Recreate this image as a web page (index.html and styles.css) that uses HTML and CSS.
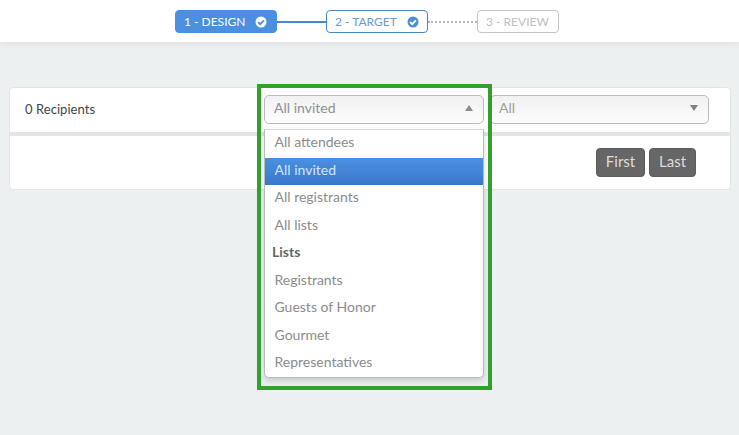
FILE: index.html
```html
<!DOCTYPE html>
<html lang="en">
<head>
<meta charset="utf-8">
<title>Recipients</title>
<link rel="stylesheet" href="styles.css">
</head>
<body>
<header class="topbar">
  <div class="step step-done">1 - DESIGN
    <svg class="check" viewBox="0 0 12 12"><circle cx="6" cy="6" r="5.5" fill="#fff"/><path d="M3.2 6.2 5.2 8.2 8.9 4.3" fill="none" stroke="#4a8fe0" stroke-width="1.8"/></svg>
  </div>
  <span class="link link-solid"></span>
  <div class="step step-active">2 - TARGET
    <svg class="check" viewBox="0 0 12 12"><circle cx="6" cy="6" r="5.5" fill="#4d8fd6"/><path d="M3.2 6.2 5.2 8.2 8.9 4.3" fill="none" stroke="#fff" stroke-width="1.8"/></svg>
  </div>
  <span class="link link-dotted"></span>
  <div class="step step-todo">3 - REVIEW</div>
</header>
<main class="content">
  <section class="card">
    <div class="row row-filters">
      <div class="count">0 Recipients</div>
      <div class="select select-open">
        <span>All invited</span><i class="caret caret-up"></i>
        <ul class="menu">
          <li>All attendees</li>
          <li class="selected">All invited</li>
          <li>All registrants</li>
          <li>All lists</li>
          <li class="group">Lists</li>
          <li>Registrants</li>
          <li>Guests of Honor</li>
          <li>Gourmet</li>
          <li>Representatives</li>
        </ul>
      </div>
      <div class="select select-second">
        <span>All</span><i class="caret caret-down"></i>
      </div>
    </div>
    <div class="row row-pager">
      <button class="btn btn-first">First</button>
      <button class="btn btn-last">Last</button>
    </div>
  </section>
</main>
<div class="focus-box"></div>
</body>
</html>
```
FILE: styles.css
```css
* { box-sizing: border-box; }
html, body { margin: 0; padding: 0; }
body {
  width: 739px;
  height: 435px;
  overflow: hidden;
  background: #ecf0f1;
  font-family: Lato, "Open Sans", sans-serif;
  position: relative;
}
.topbar {
  height: 42px;
  background: #fff;
  box-shadow: 0 1px 8px rgba(0,0,0,.08);
  display: flex;
  align-items: flex-start;
  padding: 10px 0 0 175px;
}
.step {
  height: 23px;
  border-radius: 4px;
  border: 1px solid;
  display: flex;
  align-items: center;
  font-size: 12px;
  padding-left: 8px;
  white-space: nowrap;
}
.step-done { width: 102px; background: #4a8fe0; border-color: #4a8fe0; color: #fff; }
.step-active { width: 102px; background: #fff; border-color: #4b87c5; color: #6a9ad0; }
.step-todo { width: 82px; background: #fff; border-color: #c4c4c4; color: #c0c0c0; }
.check { width: 12px; height: 12px; margin-left: 10px; }
.link { width: 49px; margin-top: 11px; }
.link-solid { border-top: 2px solid #4b87c5; }
.link-dotted { border-top: 2px dotted #b4b4b4; }
.content { padding: 45px 8px 0 9px; }
.card {
  width: 722px;
  height: 103px;
  background: #fff;
  border: 1px solid #e2e4e5;
  border-radius: 4px;
}
.row-filters {
  height: 44px;
  display: flex;
  align-items: flex-start;
  padding: 7px 0 0 15px;
}
.count {
  width: 239px;
  font-size: 13px;
  letter-spacing: .05px;
  line-height: 29px;
  color: #3f4648;
}
.select {
  height: 29px;
  width: 220px;
  border: 1px solid #b8bcbe;
  border-radius: 5px;
  background: linear-gradient(#f1f1f1, #fdfdfd);
  display: flex;
  align-items: center;
  justify-content: space-between;
  padding: 0 9px 4px;
  font-size: 14px;
  color: #909090;
  position: relative;
}
.select-second { width: 219px; margin-left: 6px; padding-left: 8px; color: #a0a0a0; }
.caret { width: 0; height: 0; border-left: 4px solid transparent; border-right: 4px solid transparent; margin-right: 1px; }
.caret-up { border-bottom: 6px solid #8c8c8c; }
.caret-down { border-top: 6px solid #808080; }
.menu {
  position: absolute;
  left: -1px;
  top: 33px;
  width: 220px;
  height: 249px;
  margin: 0;
  padding: 0;
  list-style: none;
  background: #fff;
  border: 1px solid #b8bcbe;
  border-top-color: #d8dadb;
  border-radius: 0 0 5px 5px;
  box-shadow: 0 3px 6px rgba(0,0,0,.16);
  color: #8c8c8c;
  z-index: 2;
}
.menu li {
  height: 27.5px;
  line-height: 23.5px;
  padding-left: 9.5px;
  font-size: 14px;
}
.menu .selected {
  background: linear-gradient(#4a90e2, #3b78c9);
  color: #cfe6ff;
}
.menu .group {
  font-weight: 700;
  color: #63676a;
  padding-left: 7px;
  line-height: 24.5px;
}
.row-pager {
  height: 57px;
  border-top: 4px solid #e2e4e5;
  display: flex;
  justify-content: flex-end;
  gap: 4px;
  padding: 12px 34px 0 0;
}
.btn {
  height: 29px;
  border: 1px solid #5c5c5c;
  border-radius: 4px;
  background: #666;
  color: #dcdcdc;
  font-family: inherit;
  font-size: 15px;
  padding: 0 0 4px;
}
.btn-first { width: 49px; }
.btn-last { width: 47px; }
.focus-box {
  position: absolute;
  left: 257px;
  top: 84px;
  width: 235px;
  height: 306px;
  border: 4px solid #32a02c;
  pointer-events: none;
  z-index: 3;
}
```
